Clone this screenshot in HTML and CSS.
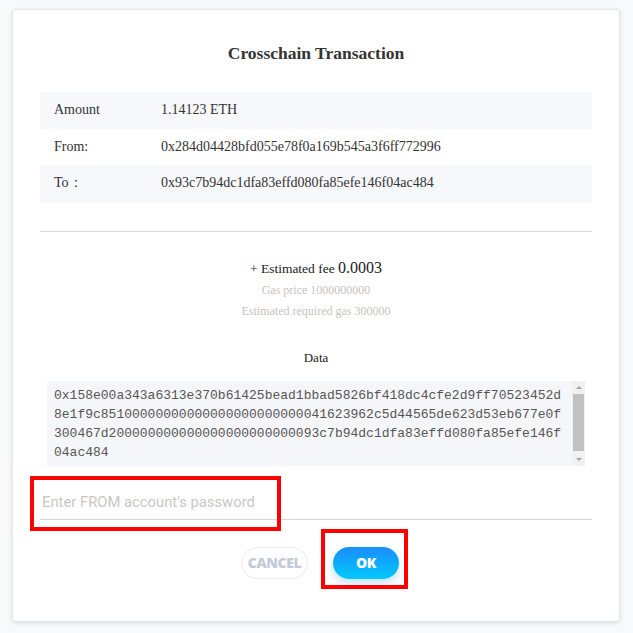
FILE: index.html
```html
<!DOCTYPE html>
<html>
<head>
<meta charset="utf-8">
<link rel="stylesheet" href="styles.css">
</head>
<body>
<div class="page">
  <div class="modal">
    <h2 class="title">Crosschain Transaction</h2>
    <div class="info">
      <div class="row"><span class="label">Amount</span><span class="value">1.14123 ETH</span></div>
      <div class="row"><span class="label">From:</span><span class="value">0x284d04428bfd055e78f0a169b545a3f6ff772996</span></div>
      <div class="row"><span class="label">To：</span><span class="value">0x93c7b94dc1dfa83effd080fa85efe146f04ac484</span></div>
    </div>
    <div class="divider"></div>
    <div class="fee">
      <div class="fee-main">+ Estimated fee <span class="fee-num">0.0003</span></div>
      <div class="fee-sub">Gas price 1000000000</div>
      <div class="fee-sub">Estimated required gas 300000</div>
    </div>
    <div class="data-label">Data</div>
    <div class="data-box">
      <div class="data-text">
        <div class="data-line">0x158e00a343a6313e370b61425bead1bbad5826bf418dc4cfe2d9ff70523452d</div>
        <div class="data-line">8e1f9c851<!-- -->000000<!-- -->000000<!-- -->000000<!-- -->000000<!-- -->41623962c5d44565de623d53eb677e0f</div>
        <div class="data-line">300467d2<!-- -->000000<!-- -->000000<!-- -->000000<!-- -->000000<!-- -->93c7b94dc1dfa83effd080fa85efe146f</div>
        <div class="data-line">04ac484</div>
      </div>
      <div class="scrollbar">
        <span class="arrow arrow-up"></span>
        <span class="thumb"></span>
        <span class="arrow arrow-down"></span>
      </div>
    </div>
    <div class="pwd">
      <input class="pwd-input" type="password" placeholder="Enter FROM account's password">
      <span class="mark mark-input"></span>
    </div>
    <div class="actions">
      <button class="btn btn-cancel">CANCEL</button>
      <div class="ok-wrap">
        <button class="btn btn-ok">OK</button>
        <span class="mark mark-ok"></span>
      </div>
    </div>
  </div>
</div>
</body>
</html>
```

FILE: styles.css
```css
html, body {
  margin: 0;
  padding: 0;
}
body {
  background: #f8f9fb;
  width: 633px;
  height: 633px;
  overflow: hidden;
}
.page {
  padding: 9px 13px 0 12px;
}
.modal {
  width: 608px;
  box-sizing: border-box;
  background: #fff;
  border: 1px solid #e6e7ea;
  border-radius: 4px;
  box-shadow: 0 1px 4px rgba(0, 0, 0, 0.12);
  padding: 33px 27px 42px;
  font-family: "Liberation Serif", "Times New Roman", serif;
  color: #333;
}
.title {
  margin: 0;
  font-size: 17.5px;
  line-height: 20px;
  font-weight: bold;
  text-align: center;
  color: #333;
}
.info {
  margin-top: 29px;
}
.row {
  display: flex;
  align-items: center;
  height: 36.5px;
  padding-left: 14px;
  font-size: 14px;
  color: #333;
}
.row:nth-child(odd) {
  background: #f7f8fb;
}
.label {
  width: 107px;
  flex: none;
}
.divider {
  margin-top: 29px;
  height: 1px;
  background: #d8d8d8;
}
.fee {
  margin-top: 25px;
  text-align: center;
}
.fee-main {
  line-height: 22px;
  font-size: 13.5px;
  color: #222;
}
.fee-num {
  font-size: 16px;
}
.fee-sub {
  line-height: 21px;
  font-size: 12px;
  color: #c8c3c3;
}
.data-label {
  margin-top: 26px;
  line-height: 20px;
  font-size: 13px;
  text-align: center;
  color: #222;
}
.data-box {
  margin: 13px 7px 0;
  height: 85px;
  display: flex;
  background: #f5f6fa;
}
.data-text {
  flex: 1;
  padding: 5px 6px 0 7px;
  font-family: "Liberation Mono", "Courier New", monospace;
  font-size: 13px;
  line-height: 19px;
  color: #555;
  overflow: hidden;
}
.data-line {
  white-space: nowrap;
}
.scrollbar {
  width: 13px;
  flex: none;
  background: #f1f1f1;
  display: flex;
  flex-direction: column;
  align-items: center;
}
.arrow {
  width: 0;
  height: 0;
  border-left: 3px solid transparent;
  border-right: 3px solid transparent;
  margin: 5px 0;
}
.arrow-up {
  border-bottom: 3px solid #a3a3a3;
}
.arrow-down {
  border-top: 3px solid #a3a3a3;
}
.thumb {
  width: 11px;
  flex: 1;
  background: #c1c1c1;
  margin: 0 0 2px;
}
.pwd {
  position: relative;
  margin-top: 14px;
}
.pwd-input {
  display: block;
  width: 100%;
  box-sizing: border-box;
  height: 40px;
  border: none;
  border-bottom: 1px solid #d6d6d6;
  padding: 5px 2px 0;
  background: transparent;
  font-family: Roboto, "Liberation Sans", sans-serif;
  font-size: 14.8px;
  outline: none;
}
.pwd-input::placeholder {
  color: #cbc6c6;
}
.mark {
  position: absolute;
  box-sizing: border-box;
  border: 4px solid #ff0000;
  pointer-events: none;
}
.mark-input {
  left: -10px;
  top: -4px;
  width: 251px;
  height: 55px;
}
.actions {
  margin-top: 27px;
  display: flex;
  justify-content: center;
  gap: 25px;
  padding-left: 8px;
}
.btn {
  height: 32px;
  border-radius: 16px;
  font-family: "Open Sans", "Liberation Sans", sans-serif;
  font-weight: 800;
  font-size: 14px;
  letter-spacing: -0.4px;
  cursor: pointer;
  padding: 0;
}
.btn-cancel {
  width: 67px;
  background: #fff;
  border: 1px solid #ececf0;
  color: #c6c9d8;
}
.ok-wrap {
  position: relative;
}
.btn-ok {
  display: block;
  width: 66px;
  border: none;
  color: #fff;
  background: linear-gradient(to bottom, #1a8cfd, #03c9ff);
  box-shadow: 0 4px 8px rgba(0, 140, 255, 0.25);
}
.mark-ok {
  left: -12px;
  top: -18px;
  width: 87px;
  height: 60px;
}
```
